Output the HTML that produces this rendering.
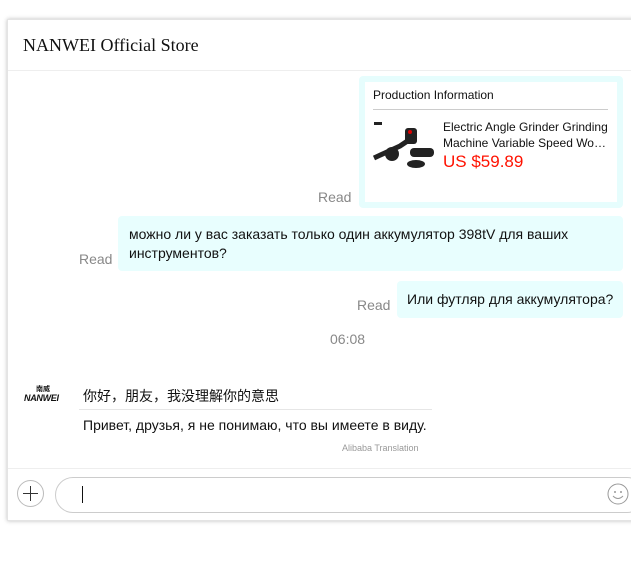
<!DOCTYPE html>
<html><head><meta charset="utf-8"><style>
*{margin:0;padding:0;box-sizing:border-box}
body{width:631px;height:568px;background:#fff;font-family:"Liberation Sans","Noto Sans CJK SC",sans-serif;position:relative;overflow:hidden}
.a{position:absolute;white-space:nowrap}
.panel{position:absolute;left:7px;top:19px;width:640px;height:502px;border:1px solid #e4e4e4;box-shadow:0 0 4px rgba(0,0,0,.25)}
.read{color:#888;font-size:14px}
.bub{position:absolute;background:#e8fefe;border-radius:4px;font-size:14px;color:#111;line-height:19px}
</style></head><body>
<div class="panel"></div>
<div class="a" style="left:23px;top:35px;font-family:'Liberation Serif',serif;font-size:18px;color:#111">NANWEI Official Store</div>
<div class="a" style="left:8px;top:70px;width:623px;border-top:1px solid #eee"></div>

<div class="a" style="left:359px;top:76px;width:264px;height:132px;background:#fff;border:6px solid #e6fdfd;border-radius:4px"></div>
<div class="a" style="left:373px;top:88px;font-size:12px;color:#111">Production Information</div>
<div class="a" style="left:373px;top:109px;width:235px;border-top:1px solid #ccc"></div>
<svg class="a" style="left:372px;top:118px" width="64" height="56">
<rect x="2" y="4" width="8" height="3" fill="#222"/>
<path d="M2 40 L28 28 L40 20" stroke="#222" stroke-width="5" fill="none"/>
<circle cx="20" cy="36" r="7" fill="#222"/><rect x="33" y="10" width="12" height="16" rx="3" fill="#222"/>
<circle cx="38" cy="14" r="2" fill="#d00"/><rect x="38" y="30" width="24" height="9" rx="4" fill="#222"/>
<ellipse cx="44" cy="46" rx="9" ry="4" fill="#222"/></svg>
<div class="a" style="left:443px;top:119px;font-size:12px;color:#111;line-height:16px">Electric Angle Grinder Grinding<br>Machine Variable Speed Wo…</div>
<div class="a" style="left:443px;top:152px;font-size:17px;color:#f10">US $59.89</div>
<div class="a read" style="left:318px;top:189px">Read</div>

<div class="bub" style="left:118px;top:216px;width:505px;height:55px;padding:9px 11px">можно ли у вас заказать только один аккумулятор 398tV для ваших инструментов?</div>
<div class="a read" style="left:79px;top:251px">Read</div>

<div class="bub" style="left:397px;top:281px;width:226px;height:37px;padding:9px 10px;white-space:nowrap">Или футляр для аккумулятора?</div>
<div class="a read" style="left:357px;top:297px">Read</div>

<div class="a" style="left:330px;top:331px;font-size:14px;color:#888">06:08</div>

<div class="a" style="left:36px;top:384px;font-size:7px;font-weight:bold;color:#111">南威</div>
<div class="a" style="left:24px;top:393px;font-size:9px;font-weight:bold;font-style:italic;color:#111;letter-spacing:-.3px">NANWEI</div>
<div class="a" style="left:83px;top:386px;font-size:14px;color:#111">你好，朋友，我没理解你的意思</div>
<div class="a" style="left:79px;top:409px;width:353px;border-top:1px solid #e6e6e6"></div>
<div class="a" style="left:83px;top:417px;font-size:14px;color:#111">Привет, друзья, я не понимаю, что вы имеете в виду.</div>
<div class="a" style="left:342px;top:443px;font-size:9px;color:#999">Alibaba Translation</div>

<div class="a" style="left:8px;top:468px;width:623px;border-top:1px solid #eee"></div>
<div class="a" style="left:17px;top:480px;width:27px;height:27px;border:1px solid #bbb;border-radius:50%"></div>
<div class="a" style="left:23px;top:493px;width:15px;border-top:1.5px solid #333"></div>
<div class="a" style="left:30px;top:486px;height:15px;border-left:1.5px solid #333"></div>
<div class="a" style="left:55px;top:477px;width:590px;height:36px;border:1px solid #ccc;border-radius:18px"></div>
<div class="a" style="left:82px;top:486px;height:17px;border-left:1px solid #111"></div>
<svg class="a" style="left:607px;top:483px" width="22" height="22"><circle cx="11" cy="11" r="10" fill="none" stroke="#999"/><circle cx="8" cy="9" r="1" fill="#999"/><circle cx="14" cy="9" r="1" fill="#999"/><path d="M6 13 Q11 18 16 13" stroke="#999" fill="none"/></svg>
</body></html>
